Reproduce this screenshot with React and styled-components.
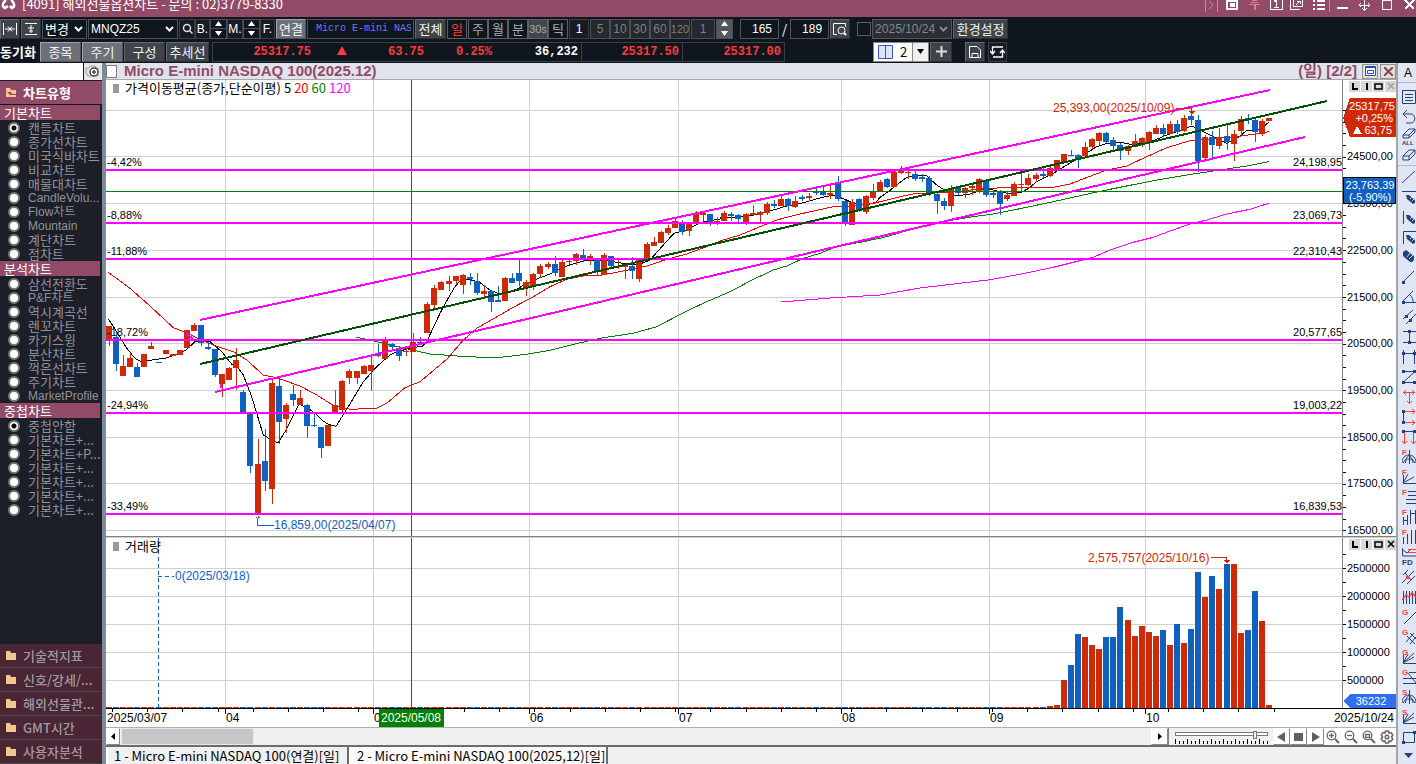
import React from 'react';
import styled, { createGlobalStyle, css } from 'styled-components';

const UI = '"Noto Sans CJK KR",sans-serif';
const WIDE = '"Liberation Sans","Noto Sans CJK KR",sans-serif';
const MONO = '"Liberation Mono",monospace';

const wine = '#924b67';
const red = '#ce2a08';
const blue = '#1060c0';
const magenta = '#ff00ff';

const Global = createGlobalStyle`
  *{box-sizing:border-box}
  html,body{margin:0;padding:0;background:#f0f0f0}
  body{font:13px/14px ${UI};color:#000}
  button,input,select{font:inherit;color:inherit;margin:0;padding:0;border:0;border-radius:0;background:none}
  svg{display:block;flex:none}
`;

const Window = styled.div`
  min-height:100vh;display:flex;flex-direction:column;
`;

/* ---------- window title ---------- */
const TitleBar = styled.header`
  height:17px;overflow:hidden;background:${wine};color:#fff;
  display:flex;align-items:flex-end;
`;
const Logo = styled.svg.attrs({ width: 22, height: 17, viewBox: '0 0 22 17' })``;
const TitleText = styled.h1`
  margin:0;flex:1;font:400 13px/26px ${UI};white-space:nowrap;
`;
const TitleButton = styled.button`
  width:${p => p.$w || 22}px;height:17px;color:${p => (p.$dim ? '#d8808c' : '#fff')};
`;

/* ---------- toolbars ---------- */
const Toolbars = styled.div`
  height:46px;background:#0f161d;color:#fff;overflow:hidden;
  display:flex;flex-direction:column;gap:2px;padding-top:1px;
`;
const Bar = styled.div`display:flex;align-items:center;height:21px;gap:1px;`;
const Cluster = styled.div`display:flex;flex:none;`;
const Gap = styled.span`width:${p => p.$w}px;flex:none;`;
const tones = {
  normal: css`background:#3f444b;border-color:#62676e #2c3036 #2c3036 #62676e;color:#f0f0f0;`,
  lit: css`background:#6b7079;border-color:#a0a4b8 #50545c #50545c #a0a4b8;color:#f4f4f4;`,
  dark: css`background:#181b24;border-color:#3c4046;color:#fff;`,
  period: css`background:#43474d;border-color:#5c6066;color:#a6a9ad;`,
  off: css`background:#25292e;border-color:#4c5056;color:#7c7f83;`,
  selected: css`background:#10161d;border-color:#5c6066;color:#ff3838;`,
};
const Tool = styled.button`
  width:${p => p.$w}px;height:20px;flex:none;border:1px solid;
  display:flex;align-items:center;justify-content:center;white-space:nowrap;
  ${p => p.$latin && css`font:400 ${p.$latin}px/14px ${WIDE};`}
  ${p => tones[p.$tone || 'normal']}
`;
const Pick = styled.span`
  width:${p => p.$w}px;height:20px;flex:none;display:flex;align-items:center;
  border:1px solid #50545a;padding-right:3px;
  background:${p => (p.$off ? '#2b2e33' : '#10161d')};color:${p => (p.$off ? '#85888c' : '#fff')};
  select{flex:1;min-width:0;appearance:none;padding-left:2px;outline:0;${p => p.$latin && css`font:400 12px/14px ${WIDE};`}}
`;
const Field = styled.input`
  width:${p => p.$w}px;height:20px;flex:none;
  && {border:1px solid #50545a;background:#10161d;color:#fff;text-align:right;padding-right:6px;font:400 12px/14px ${WIDE}}
`;
const NameField = styled(Field)`
  &&& {font:400 10px/14px ${MONO};color:#7c70e8;text-align:left;padding:0 2px 0 8px}
`;
const Spin = styled.span`
  width:17px;height:20px;flex:none;display:flex;flex-direction:column;
  border:1px solid #4c5056;
  button{flex:1;width:100%;display:flex;align-items:center;justify-content:center;background:${p => (p.$off ? '#55585c' : '#10161d')}}
  button + button{border-top:1px solid #4c5056}
`;
const DarkCheck = styled.input`
  && {appearance:none;width:14px;height:14px;flex:none;border:1px solid #5a5e64;background:#10161d}
`;
const SyncLabel = styled.span`width:39px;flex:none;font-weight:700;white-space:nowrap;`;
const Quotes = styled.div`
  display:flex;align-items:center;height:20px;width:573px;flex:none;border:1px solid #3a3f45;
  font:700 12px/18px ${MONO};color:#ff3a3a;
`;
const Quote = styled.span`
  width:${p => p.$w}px;text-align:right;padding-right:3px;height:18px;
  color:${p => (p.$plain ? '#fff' : 'inherit')};
  border-right:${p => (p.$line ? '1px solid #3a3f45' : 0)};
  svg{display:inline-block}
`;
const LayoutPick = styled.span`
  width:56px;height:20px;display:flex;align-items:center;background:#fff;border:1px solid #888;color:#000;
  padding-left:4px;
  select{appearance:none;flex:1;min-width:0;padding-left:7px;outline:0}
`;
const PickArrow = styled.span`
  width:16px;height:18px;border-left:1px solid #888;background:#f0f0f0;display:flex;align-items:center;justify-content:center;
`;

/* ---------- body ---------- */
const Body = styled.div`flex:1;display:flex;`;

const Sidebar = styled.aside`
  width:106px;flex:none;display:flex;flex-direction:column;background:#1c1f28;
  border-right:4px solid #7c8a9c;
`;
const SearchRow = styled.div`
  display:flex;height:17px;background:#10161d;margin-bottom:1px;
  input{flex:1;min-width:0;background:#fff;outline:0}
  button{width:18px;background:#e8e8e8;margin-left:1px}
`;
const Group = styled.button`
  && {
    display:flex;align-items:center;gap:7px;width:100%;
    height:24px;padding-left:6px;text-align:left;white-space:nowrap;
    font:${p => (p.$open ? 700 : 500)} 13px/14px ${UI};
    color:${p => (p.$open ? '#fff' : '#a09aa2')};
    background:${p => (p.$open ? wine : '#4a2533')};
    border-bottom:1px solid ${p => (p.$open ? '#10161d' : '#4a464c')};
  }
`;
const Section = styled.h2`
  margin:0 2px 1px 0;height:15px;background:${wine};color:#fff;
  font:400 13px/15px ${UI};padding-left:4px;
`;
const RadioRow = styled.label`
  display:flex;align-items:center;height:14px;padding-left:8px;
  font:400 13px/14px ${UI};color:#8f929c;white-space:nowrap;
  ${p => p.$latin && css`font:400 12px/14px ${WIDE};`}
  input{appearance:none;flex:none;width:12px;height:12px;border-radius:50%;margin-right:8px;
    background:#fff;border:2px solid #777}
  input:checked{background:radial-gradient(circle,#000 2px,#fff 3px)}
`;
const Fill = styled.div`flex:1;`;

const Center = styled.main`flex:1;min-width:0;display:flex;flex-direction:column;background:#fff;`;
const ChartHead = styled.div`
  height:17px;background:#dfe3eb;border-bottom:1px solid #a8a8a8;color:${wine};
  display:flex;align-items:center;gap:2px;
  font:700 15px/16px ${WIDE};
  input{appearance:none;width:11px;height:13px;background:#fff;border:1px solid #808080;margin-right:5px}
  strong{flex:1;white-space:nowrap}
  button{width:16px;height:15px;background:#e0e0e0;border:1px solid #909090;display:flex;align-items:center;justify-content:center}
`;
const Pane = styled.section`
  display:flex;height:${p => p.$h}px;flex:none;position:relative;
`;
const chartText = css`font:400 11px/14px ${WIDE};shape-rendering:crispEdges;`;
const Plot = styled.svg`flex:1 1 0;min-width:0;height:100%;border-right:1px solid #808080;${chartText}`;
const Axis = styled.svg`width:53px;height:100%;${chartText}`;
const PaneButtons = styled.div`
  position:absolute;top:1px;right:0;display:flex;gap:1px;
  button{width:11px;height:11px;background:#d8d8d8;display:flex;align-items:center;justify-content:center}
`;
const Legend = styled.div`
  position:absolute;left:7px;top:1px;display:flex;align-items:center;height:14px;gap:3px;white-space:nowrap;
  i{width:6px;height:9px;background:#9a9a9a;margin-right:3px}
`;
const Key = styled.span`color:${p => p.$c};`;
const Rule = styled.div`height:2px;background:#808080;border-bottom:1px solid #d0d0d0;`;
const DateAxis = styled.svg`width:100%;height:20px;border-bottom:1px solid #b0b0b0;${chartText}font-size:12px;`;

const ScrollRow = styled.div`
  display:flex;height:19px;background:#f0f0f0;border-bottom:2px solid #6c6c6c;margin-top:auto;
`;
const Thumb = styled.div`width:133px;background:#c6c6c8;border:1px solid #e8e8e8;margin-left:1px;`;
const Track = styled.div`flex:1;`;
const Press = styled.button`
  && {
    width:${p => p.$w || 17}px;height:17px;background:#fff;color:#000;
    border:1px solid #fff;border-right-color:#888;border-bottom-color:#888;
    display:flex;align-items:center;justify-content:center;
  }
`;
const Zoomer = styled.div`
  width:105px;display:flex;flex-direction:column;padding:2px 6px 0;border-left:1px solid #808080;
  input{appearance:none;width:93px;height:8px;display:block;outline:0}
  input::-webkit-slider-runnable-track{height:4px;background:#fff;border:1px solid #777}
  input::-webkit-slider-thumb{appearance:none;width:4px;height:8px;margin-top:-2px;background:#f0f0f0;border:1px solid #777}
`;
const Lenses = styled.div`display:flex;background:#fff;button{width:18px;display:flex;align-items:center;justify-content:center}`;
const Tabs = styled.nav`display:flex;height:17px;background:#f0f0f0;`;
const Tab = styled.button`
  && {
    height:17px;width:${p => p.$w}px;text-align:left;padding-left:6px;white-space:nowrap;
    background:${p => (p.$on ? '#fafafa' : '#f0f0f0')};
    border-left:2px solid #fff;border-right:2px solid #6c6c6c;
  }
`;

const Strip = styled.aside`
  width:20px;flex:none;background:#e1e6f5;border-left:2px solid #a4a4ac;overflow:hidden;
  display:flex;flex-direction:column;
`;
const StripButton = styled.button`
  && {
    height:${p => p.$h || 20}px;width:18px;flex:none;padding-left:4px;color:#24427a;
    border-bottom:${p => (p.$line ? '1px solid #b4b8c4' : 0)};
    margin-bottom:${p => p.$after || 0}px;
  }
`;

/* ---------- chart data ---------- */
const STEP = 7.073;
const FIRST = 3;
const barX = i => Math.round(FIRST + i * STEP);

/* Each row: direction, high, body top, body bottom, low – in thirds of a pixel below the given level. */
const block = (level, rows) =>
  rows.trim().split(/\s*;\s*/).filter(Boolean).map(r => {
    const [dir, ...v] = r.trim().split(' ');
    return [dir === 'u', ...v.map(n => Math.round(level + Number(n) / 3))];
  });

const candles = [
  ...block(180, `u 198 198 240 257;d 215 232 311 332;u 285 319 347 347;u 280 294 322 322;d 310 321 350 350;u 282 282 322 322;
  u 246 258 266 266;d 306 306 309 309;u 270 270 281 281;u 282 282 287 287;u 270 270 284 284;u 210 210 263 263;u 188 195 213 213;
  d 195 195 248 257;d 245 262 266 270;d 267 267 345 350;u 342 342 372 410;u 321 324 360 360;u 264 300 324 390;d 390 396 457 457;
  d 457 457 617 638;u 537 612 762 762;d 507 603 662 692;u 360 369 686 731;d 352 378 486 553;u 430 435 476 520;d 375 402 420 437;
  u 390 414 435 435;d 432 435 497 533;d 460 495 498 500;d 501 501 563 593;u 495 495 557 557;u 390 435 457 457;u 360 363 450 457;
  u 327 333 353 371;u 333 333 353 371;u 315 318 342 342;u 288 315 333 392;d 252 280 287 290;u 232 240 297 298;d 249 252 260 272;
  d 258 264 287 302;u 268 273 276 288;u 219 246 276 277`),
  ...block(100, `d 470 486 490 490;u 366 372 459 459;u 315 324 375 388;u 303 306 330 330;u 288 303 312 333;u 288 288 303 315;
  u 282 285 315 342;d 279 291 297 315;d 279 303 339 345;u 315 333 342 351;d 330 333 366 396;d 318 360 366 366;u 291 294 363 363;
  d 279 294 309 309;d 237 279 303 318;u 300 306 321 348;u 279 282 318 330;u 252 258 282 294;u 246 252 261 267;d 228 252 279 288;
  u 237 246 291 291;u 237 243 246 255;u 219 222 243 255;d 207 225 237 246;u 222 228 235 255;d 237 237 273 288;u 219 225 285 285;
  d 228 228 258 264;u 237 258 260 267;u 252 255 261 297;d 231 258 272 297;u 237 240 297 306;u 186 192 237 237;u 171 186 198 198;
  u 153 156 189 189;u 135 144 159 165;u 118 123 144 144;d 120 130 156 165;u 130 132 153 168;u 93 98 126 130;u 96 99 105 123;
  d 102 102 126 137;u 111 123 126 135;u 93 99 123 124`),
  ...block(0, `d 396 402 408 423;d 402 405 417 426;u 399 402 426 435;u 375 399 405 408;u 393 396 405 430;u 366 372 399 405;
  d 360 372 378 384;u 348 357 378 378;d 354 357 378 393;u 348 363 381 384;d 345 351 357 363;u 339 348 354 363;d 324 334 339 345;
  d 318 333 345 348;u 315 339 346 357;d 288 309 357 363;d 360 363 426 438;u 357 366 435 435;d 354 357 390 396;u 345 348 396 402;
  u 312 336 354 360;u 300 306 333 333;d 294 297 321 324;u 273 276 321 321;u 258 267 279 282;u 270 275 279 297;d 273 282 297 303;
  d 282 291 297 306;d 288 294 342 348;d 336 342 363 402;d 354 363 378 390;u 315 324 378 396;d 318 324 339 345;u 321 324 339 354;
  u 312 318 324 345;u 294 297 333 339;d 300 303 345 351;d 330 339 345 354;d 330 336 372 405;u 336 345 357 363;u 306 312 348 348;
  u 276 312 315 333;u 282 294 315 318;u 279 285 297 306;d 264 282 288 298;u 261 264 288 291;u 240 240 267 267;u 222 222 249 249;
  d 210 225 228 228;d 222 225 237 264;u 186 201 228 231;u 174 177 201 207;u 156 159 183 195;d 156 159 186 189;d 171 180 198 210;
  d 189 195 213 240;u 195 198 213 225;u 162 183 201 201;u 171 174 189 201;u 153 156 189 210;u 135 144 162 162;d 132 144 162 171;
  u 123 132 162 162;d 120 132 156 162;u 105 114 153 156;d 96 108 120 135;d 105 120 243 276;u 165 171 234 237;d 153 171 195 240;
  u 144 171 198 207;d 132 168 186 210;u 150 162 192 243;u 108 117 153 168;d 102 115 117 132;d 117 120 156 186;u 117 123 162 168;
  u 114 114 123 123`),
];

/* Curve points in thirds of a pixel, relative to an x / y origin. */
const curve = (x0, y0, pts) =>
  pts.split(' ').map(p => {
    const [x, y] = p.split(',').map(Number);
    return `${(x0 + x / 3).toFixed(1)},${(y0 + y / 3).toFixed(1)}`;
  }).join(' ') + ' ';

const ma5 =
  curve(-6, 180, '25,177 50,215 80,265 105,295 125,306 155,300 195,295 230,283 258,270 285,245 330,245 365,275 395,312 405,312 430,345 455,410 490,525 515,540 534,548 555,515 597,432 625,445 645,460 665,480 685,493 708,499 745,440 790,365 830,320 870,285 900,270') +
  curve(294, 100, '0,513 40,502 65,500 80,485 120,400 150,345 165,320 180,303 205,297 240,308 270,330 300,343 350,328 380,310 410,297 450,282 500,258 550,243 600,240 640,245 680,252 720,252 750,240 790,195 822,160 860,150 900,128 930,122 960,117') +
  curve(614, 0, '0,411 50,412 100,405 150,393 200,378 250,368 300,354 340,345 375,358 400,370 440,376 470,365 480,352 505,335 530,315 560,292 590,286 620,288 650,315 680,335 710,348 750,342 800,325 830,333 870,342 905,337 935,318') +
  curve(914, 0, '15,332 50,305 100,280 140,255 180,232 230,200 260,190 300,187 340,194 400,182 440,165 490,148 515,138 540,150 580,170 620,190 650,175 680,152 710,150 730,140 747,126');
const ma20 =
  curve(-6, 180, '25,37 90,85 150,138 220,203 258,218 300,238 340,255 400,275 440,300 490,345 530,353 600,378 650,405 700,436 750,448 830,445 860,430 915,383 960,365') +
  curve(294, 100, '140,538 160,515 190,480 230,445 300,405 340,382 400,350 450,320 500,298 550,288 600,286 660,275 740,258 800,238 860,222 920,200') +
  curve(614, 0, '0,483 60,465 120,440 170,420 240,402 340,380 400,378 460,370 540,350 590,340 690,337 800,325 900,322') +
  curve(914, 0, '0,322 100,322 150,312 220,285 260,270 320,258 380,230 440,203 510,182 570,177 650,170 700,163 747,155');
const ma60 =
  curve(-6, 180, '768,232 800,238 850,250 900,262') +
  curve(294, 100, '50,513 90,522 200,530 290,533 380,523 450,511 500,498 560,484 610,473 700,460 770,440 860,393 920,365 990,335') +
  curve(614, 0, '96,600 160,570 200,558 250,535 300,520 350,500 430,485 500,470 560,452 620,435 700,420 760,410 820,402') +
  curve(914, 0, '0,386 100,365 235,335 300,322 400,302 500,285 600,270 680,258 747,245');
const ma120 =
  '675,222 724,218 774,215 814,208 ' +
  curve(914, 0, '-96,600 0,583 100,562 220,532 270,510 340,487 400,472 450,453 510,432 560,420 620,402 690,388 747,370');

const levels = [
  [90, '-4,42%', '24,198,95'],
  [143, '-8,88%', '23,069,73'],
  [179, '-11,88%', '22,310,43'],
  [260, '-18,72%', '20,577,65'],
  [333, '-24,94%', '19,003,22'],
  [434, '-33,49%', '16,839,53'],
];
const prices = [[30, ''], [76, '24500,00'], [123, '23500,00'], [170, '22500,00'], [217, '21500,00'], [263, '20500,00'], [310, '19500,00'], [357, '18500,00'], [403, '17500,00'], [450, '16500,00']];
const months = [[119, '04'], [267, '0'], [423, '06'], [572, '07'], [735, '08'], [883, '09'], [1039, '10']];
const volumes = { 133: 2, 134: 3, 135: 28, 136: 43, 137: 74, 138: 71, 139: 63, 140: 59, 141: 71, 142: 71, 143: 101, 144: 88, 145: 72, 146: 82, 147: 76, 148: 72, 149: 78, 150: 63, 151: 84, 152: 65, 153: 79, 154: 136, 155: 111, 156: 132, 157: 119, 158: 144, 159: 144, 160: 75, 161: 78, 162: 117, 163: 87, 164: 3 };
const volumeTicks = [[30, '2500000'], [58, '2000000'], [86, '1500000'], [114, '1000000'], [142, '500000']];

const Candle = ({ i, c: [up, hi, top, bottom, low] }) => {
  const x = barX(i);
  return (
    <g fill={up ? red : blue}>
      <rect x={x} y={hi} width="1" height={Math.max(low - hi, 1)} />
      <rect x={x - 3} y={top} width="6" height={Math.max(bottom - top, 1)} />
    </g>
  );
};

const MonthLines = () => months.map(([x]) => <rect key={x} x={x} y="0" width="1" height="100%" fill="#d0d0d0" />);

const PriceChart = () => (
  <Plot>
    {prices.map(([y]) => <rect key={y} x="0" y={y} width="100%" height="1" fill="#d0d0d0" />)}
    <MonthLines />
    <polyline points={ma5} fill="none" stroke="#000" />
    <polyline points={ma20} fill="none" stroke="#f00000" />
    <polyline points={ma60} fill="none" stroke="#008000" />
    <polyline points={ma120} fill="none" stroke={magenta} />
    {candles.map((c, i) => <Candle key={i} i={i} c={c} />)}
    <rect x="0" y="111" width="100%" height="1" fill="#008000" />
    <rect x="305" y="0" width="1" height="100%" fill="#008000" />
    {levels.map(([y, left, right]) => (
      <g key={y}>
        <rect x="0" y={y - 1} width="100%" height="2" fill={magenta} />
        <text x="1" y={y - 4}>{left}</text>
        <text x="100%" y={y - 4} textAnchor="end">{right}</text>
      </g>
    ))}
    <g strokeWidth="2" stroke={magenta}>
      <line x1="94" y1="240" x2="1164" y2="10" />
      <line x1="109" y1="312" x2="1199" y2="57" />
      <line x1="80" y1="253" x2="87" y2="259" />
      <line x1="115" y1="304" x2="115" y2="308" />
      <line x1="94" y1="284" x2="1221" y2="21" stroke="#005000" />
    </g>
    <g fill={red}>
      <text x="947" y="32" fontSize="12">25,393,00(2025/10/09)</text>
      <path d="M1070 28h16v4h-1v-3h-15zM1082 31h7l-3 3h-1z" />
    </g>
    <g fill={blue}>
      <text x="168" y="449" fontSize="12">16,859,00(2025/04/07)</text>
      <path d="M151 436h1v9h16v1h-17zM149 438h5l-2-2z" />
    </g>
  </Plot>
);

const PriceAxis = () => (
  <Axis>
    {Array.from({ length: 37 }, (_, k) => <rect key={k} x="0" y={Math.round(30 + k * 11.68)} width="3" height="1" />)}
    {prices.map(([y, t]) => <text key={y} x="4" y={y + 4}>{t}</text>)}
    <path d="M0 38 7 18H53V57H7Z" fill={red} />
    <g fill="#fff" textAnchor="end">
      <text x="52" y="30">25317,75</text>
      <text x="50" y="42">+0,25%</text>
      <text x="49" y="54">63,75</text>
      <path d="m10 54 4-8 5 8z" />
    </g>
    <rect x="0.5" y="97.5" width="52" height="26" fill={blue} stroke="#000" />
    <g fill="#fff" textAnchor="middle">
      <text x="27" y="109">23,763,39</text>
      <text x="27" y="121">(-5,90%)</text>
    </g>
  </Axis>
);

const VolumeChart = () => (
  <Plot>
    {volumeTicks.map(([y]) => <rect key={y} x="0" y={y} width="100%" height="1" fill="#d0d0d0" />)}
    <MonthLines />
    {candles.map(([up], i) => {
      const h = volumes[i] || 1;
      return <rect key={i} x={barX(i) - 3} y={170 - h} width="6" height={h} fill={up ? red : blue} />;
    })}
    <rect x="305" y="0" width="1" height="100%" fill="#008000" />
    <path d="M52.500 170V0M52 38.500h16" stroke={blue} strokeDasharray="4 3" fill="none" />
    <text x="69" y="42" fill={blue} fontSize="12">0(2025/03/18)</text>
    <g fill={red}>
      <text x="982" y="24" fontSize="12">2,575,757(2025/10/16)</text>
      <path d="M1105 19h16v4h-1v-3h-15zM1117 22h7l-3 3h-1z" />
    </g>
  </Plot>
);

const VolumeAxis = () => (
  <Axis>
    {Array.from({ length: 10 }, (_, k) => <rect key={k} x="0" y={16 + k * 14} width="3" height="1" />)}
    {volumeTicks.map(([y, t]) => <text key={y} x="4" y={y + 4}>{t}</text>)}
    <path d="M0 163 7 156H53V170H7Z" fill="#3070f0" />
    <text x="28" y="167" fill="#fff" textAnchor="middle">36232</text>
  </Axis>
);

const Dates = () => (
  <DateAxis>
    <rect width="100%" height="1" />
    {Array.from({ length: 34 }, (_, k) => <rect key={k} x={Math.round(6 + k * 35.2)} y="0" width="1" height="4" />)}
    {months.map(([x, t]) => (
      <g key={x}>
        <rect x={x} y="0" width="1" height="6" />
        <text x={x + 1} y="14">{t}</text>
      </g>
    ))}
    <text x="1" y="14">2025/03/07</text>
    <rect x="273" y="1" width="65" height="18" fill="#008000" />
    <text x="305" y="14" fill="#fff" textAnchor="middle">2025/05/08</text>
    <svg x="100%" overflow="visible"><text x="-2" y="14" textAnchor="end">2025/10/24</text></svg>
  </DateAxis>
);

/* ---------- icons ---------- */
const Chevron = () => <svg width="9" height="6" viewBox="0 0 9 6" fill="none" stroke="currentColor" strokeWidth="2"><path d="m1 1 3.500 3.500L8 1" /></svg>;
const Tri = ({ dir }) => (
  <svg width="9" height="7" viewBox="0 0 9 7" fill="currentColor">
    <path d={{ up: 'M4.500 1 8 6H1z', down: 'M1 1h7L4.500 6z', left: 'M6 0v7L2 3.500z', right: 'M3 0v7l4-3.500z' }[dir]} />
  </svg>
);
const Play = ({ d }) => <svg width="11" height="10" viewBox="0 0 11 10" fill="#606060"><path d={d} /></svg>;
const Lens = ({ children }) => (
  <svg width="14" height="14" viewBox="0 0 14 14" fill="none" stroke="#666" strokeWidth="1.300">
    <circle cx="5.500" cy="5.500" r="4.300" /><path d="m9 9 4 4" strokeWidth="2.200" />{children}
  </svg>
);
const Folder = ({ open }) => (
  <svg width="10" height="9" viewBox="0 0 10 9">
    <path d="M0 0h4l1 2h5v7H0z" fill="#f0c890" />
    {open && <path d="M1 4h4l1 2h4v1H4L2 5z" fill={wine} />}
  </svg>
);
const Glyph = ({ children, w = 22 }) => (
  <svg width={w} height="17" viewBox={`0 0 ${w} 17`} fill="none" stroke="currentColor" shapeRendering="crispEdges">{children}</svg>
);

const titleIcons = [
  [<path d="M5.500 0v12M17.500 0v12M9 1l4 4-4 4" />, true],
  [<g><path d="M5 0v9h10V0M5 1h10" strokeWidth="1.500" /><path d="M8 3h4v3H8z" fill="currentColor" /></g>],
  [<g><path d="M10.500 5v5" strokeWidth="2" /><path d="M5 4.500h11M7 2.500h7M8 .5h5" strokeWidth="1.500" /></g>, true],
  [<g><path d="M4.500 0v9.500h12V0" strokeWidth="1.500" /><path d="M8 1h2.500v6M8 7.500h5" strokeWidth="1.500" /></g>],
  [<path d="M2 0v9.500h10M5.500 0v6.500h9V0M8 5l4-4M9 1h3v3" />],
  [<g><path d="M3 1h2M7 1h8M3 5h2M7 5h8M3 9h2M7 9h8" strokeWidth="2" /><path d="M19.500 0v12" stroke="#d8808c" /></g>],
  [<path d="M5 8h11" strokeWidth="2" />],
  [<path d="M10.500 0v10M5 5h11M8 8l2.500 2.500L13 8M7 3 5 5l2 2M14 3l2 2-2 2" />],
  [<path d="M6.500 0v9.500h9V0M6 .5h10" />],
  [<path d="m7 0 9 9M16 0 7 9" strokeWidth="2" />],
];

const T = ({ children }) => <text x="0" y="8" fontSize="8" fontWeight="700" fontFamily="Liberation Sans" fill="#ff3c3c" stroke="none">{children}</text>;
const dots = (...p) => p.map(([x, y]) => <rect key={`${x}-${y}`} x={x - 1} y={y - 1} width="3" height="3" fill="currentColor" stroke="none" />);
const pencil = (
  <g>
    <path d="M4 8h3l6 5v3l-2 1-6-5z" fill="currentColor" stroke="none" />
    <path d="m8 12 2-2M10 14l3-3" stroke="#c8d2ea" />
  </g>
);
const R = '#ff3c3c';
const fan = <path d="M1.500 8v8.500H14M1 16l5-9M1 16l11-6" />;
const arcs = <path d="M0 16c0-5 3-8 7-8s7 3 7 8M3.500 16c0-3 1-4 3.500-4s4 1 4 4M7.500 3v14M7 8l6 8M7 8l-6 8" />;
const stripIcons = [
  ['목록', <path d="M.5 3.500h13v13H.5zM3 7.500h8M3 10.500h8M3 13.500h8" />],
  ['되돌리기', <path d="M5 3 1 7l4 4M1 7h8c5 0 5 9 0 9H4" />],
  ['모두 지우기', <g><path d="m1 8 6-6h6L7 8zM1 8v3h6l6-6V2M7 8v3" /><text x="0" y="18" fontSize="6" fontWeight="700" fontFamily="Liberation Sans" fill="currentColor" stroke="none">ALL</text></g>],
  ['지우기', <path d="m1 10 6-6h6l-6 6zM1 10v4h6l6-6V4M7 10v4" />, true],
  ['추세선', <path d="M0 16 13 4" />],
  ['수평선', <g><path d="M0 4.500h14" />{pencil}</g>],
  ['수직선', <g><path d="M1.500 4v13" />{pencil}</g>],
  ['십자선', <g><path d="M1.500 17V4.500H14" />{pencil}</g>],
  ['자유선', <g><path d="M1 5l3-2 8 6v4l-2 2h-2L1 9z" fill="currentColor" stroke="none" /><path d="m5 10 3-4M7 12l4-4" stroke="#c8d2ea" /></g>],
  ['선분', <g><path d="M1 15 12 4" />{dots([1, 15])}</g>],
  ['각도', <g><path d="M0 15.500h14M0 15 11 4M8 8c2 2 3 4 3 7" />{dots([1, 15])}</g>],
  ['평행선', <g><path d="M1 12 11 3M4 17 14 7" />{dots([4, 9], [8, 13])}</g>],
  ['수직폭', <g><path d="M1 4.500h13M1 15.500h13M7.500 4v12" />{dots([7, 4], [7, 15])}</g>],
  ['수평폭', <g><path d="M1.500 3v14M12.500 3v14M1 6.500h12" />{dots([1, 6], [12, 6])}</g>],
  ['지그재그', <g><path d="M1 4.500h12L1 15.500h12" />{dots([1, 4], [12, 4], [1, 15], [12, 15])}</g>],
  ['삼방향', <path stroke={R} d="M1 5.500h12M7.500 5v11M4 3 1.500 5.500 4 8M10 3l2.500 2.500L10 8M5 14l2.500 2.500L10 14" />],
  ['가로확장', <g><path d="M1.500 4v12" />{dots([1, 4], [1, 15])}<path stroke={R} d="M3 4.500h10M3 15.500h10M10 2l3 2.500L10 7M10 13l3 2.500-3 2.500" /></g>],
  ['세로확장', <g><path d="M1 4.500h12" />{dots([1, 4], [12, 4])}<path stroke={R} d="M2.500 6v10M11.500 6v10M0 14l2.500 3L5 14M9 14l2.500 3 2.500-3" /></g>],
  ['피보나치 원호', <g>{arcs}<T>F</T></g>],
  ['피보나치 팬', <g>{fan}<T>F</T></g>],
  ['피보나치 되돌림', <g><path d="M6 4.500h8M6 8.500h8M4 12.500h10M4 16.500h10" /><T>F</T></g>],
  ['피보나치 기간', <g><path d="M1.500 10v8M5.500 8v10M8.500 3v14M13.500 3v14M1 13.500h5M9 6.500h5" /><T>F</T></g>],
  ['피보나치 시간대', <g><path d="M1.500 10v7M5.500 7v10M9.500 3v14M13.500 3v14" /><T>F</T></g>],
  ['FD', <g><path d="M.5 1v8H14M1 3l4 3 4-4" /><path stroke={R} d="M6 2.500h8M6 5.500h8" /><text x="0" y="18" fontSize="8" fontWeight="700" fontFamily="Liberation Sans" fill="currentColor" stroke="none">FD</text></g>],
  ['피치포크', <g><path d="M0 16 12 4M5 17l8-8M1 8l5-5M3 6l6 7" /><rect x="4" y="9" width="3" height="3" fill={R} stroke="none" /></g>],
  ['회귀채널', <g><path d="M1.500 4v13M4.500 4v13M7.500 4v13M10.500 4v13M13.500 4v13" /><path stroke={R} strokeWidth="1.500" d="m0 13 4-5 3 2 3-4 4 4" /></g>],
  ['간선', <g><path d="M2 17 14 5" /><T>G</T></g>],
  ['간격자', <g><path d="m4 15 8-9M8 17l6-7M5 9l8 8M8 6l6 6" /><T>G</T></g>],
  ['간팬', <g>{fan}<path d="M1 16 12 6" /><T>G</T></g>],
  ['간되돌림', <g><path d="M7 5.500h7M1 11.500h13M1 16.500h13M6 6l8 10" /><T>G</T></g>],
  ['속도 원호', <g>{arcs}<T>S</T></g>],
  ['속도선', <g>{fan}<path d="M1 16 12 6" /><T>S</T></g>],
  ['사각형', <g><path d="M1.500 5.500h11v10h-11z" />{dots([12, 5], [1, 15])}</g>],
  ['더보기', <path d="M2 7h9l-4.500 5z" fill="currentColor" stroke="none" />],
];

const sections = [
  ['기본차트', ['캔들차트', '종가선차트', '미국식바차트', '비교차트', '매물대차트', 'CandleVolu...', 'Flow차트', 'Mountain', '계단차트', '점차트']],
  ['분석차트', ['삼선전환도', 'P&F차트', '역시계곡선', '렌꼬차트', '카기스윙', '분산차트', '꺽은선차트', '주기차트', 'MarketProfile']],
  ['중첩차트', ['중첩안함', '기본차트+...', '기본차트+P...', '기본차트+...', '기본차트+...', '기본차트+...', '기본차트+...']],
];

const Spinner = ({ off }) => (
  <Spin $off={off}><button aria-label="증가"><Tri dir="up" /></button><button aria-label="감소"><Tri dir="down" /></button></Spin>
);

const PaneTools = ({ faded }) => (
  <PaneButtons>
    {['M3 1v6h5', 'M5 1v7', 'M1 2h7v5H1z', 'm2 1 6 6M8 1 2 7'].map((d, i) => (
      <button key={d} aria-label={['로그', '반전', '최대화', '닫기'][i]}>
        <svg width="9" height="9" viewBox="0 0 9 9" fill="none" stroke={faded && i === 3 ? '#a0a0a0' : '#000'} strokeWidth={i < 2 ? 2 : 1.5}><path d={d} /></svg>
      </button>
    ))}
  </PaneButtons>
);

export default function App() {
  return (
    <Window>
      <Global />
      <TitleBar>
        <Logo fill="none" stroke="#fff" strokeWidth="2.500"><path d="M6 0C2 3 2 7 5 8l3-2M11 0c4 3 4 7 1 8l-2-2" /></Logo>
        <TitleText>[4091] 해외선물옵션차트 - 문의 : 02)3779-8330</TitleText>
        {titleIcons.map(([art, dim], i) => (
          <TitleButton key={i} $dim={dim} $w={i === 9 ? 18 : 22} aria-label={`창 도구 ${i + 1}`}><Glyph w={i === 9 ? 18 : 22}>{art}</Glyph></TitleButton>
        ))}
      </TitleBar>

      <Toolbars>
        <Bar>
          <Tool $w={20} aria-label="가로 맞춤"><svg width="14" height="12" viewBox="0 0 14 12" fill="none" stroke="#fff"><path d="M.5 0v12M13.500 0v12M2 6h10M5 3.500 7 6 5 8.500M9 3.500 7 6l2 2.500" /></svg></Tool>
          <Tool $w={20} aria-label="세로 맞춤"><svg width="12" height="12" viewBox="0 0 12 12" fill="none" stroke="#fff"><path d="M0 .5h12M0 11.500h12M6 2v8M3 5h6M4 8h4" /></svg></Tool>
          <Pick $w={45}><select aria-label="변경"><option>변경</option></select><Chevron /></Pick>
          <Pick $w={90} $latin><select aria-label="종목코드"><option>MNQZ25</option></select><Chevron /></Pick>
          <Cluster>
            <Tool $w={16} $tone="dark" aria-label="검색"><svg width="11" height="11" viewBox="0 0 11 11" fill="none" stroke="#ddd" strokeWidth="1.500"><circle cx="5" cy="5" r="3.500" /><path d="m7.500 7.500 3 3" /></svg></Tool>
            <Tool $w={15} $tone="dark" $latin={12}>B.</Tool><Spinner />
            <Tool $w={16} $tone="dark" $latin={12}>M.</Tool><Spinner />
            <Tool $w={15} $tone="dark" $latin={12}>F.</Tool>
          </Cluster>
          <Tool $w={30} $tone="lit">연결</Tool>
          <NameField $w={107} aria-label="종목명" defaultValue="Micro E-mini NAS" />
          <Tool $w={31}>전체</Tool>
          <Tool $w={20} $tone="selected">일</Tool>
          <Cluster>
            {['주', '월', '분', '30s', '틱'].map(t => <Tool key={t} $w={20} $tone="period" $latin={t === '30s' ? 11 : 0}>{t}</Tool>)}
          </Cluster>
          <Tool $w={20} $tone="dark" $latin={12}>1</Tool>
          <Cluster>
            {['5', '10', '30', '60', '120'].map(t => <Tool key={t} $w={20} $tone="off" $latin={t === '120' ? 11 : 12}>{t}</Tool>)}
          </Cluster>
          <Tool $w={24} $tone="off" $latin={12}>1</Tool><Spinner off />
          <Gap $w={5} />
          <Field $w={39} aria-label="표시 봉수" defaultValue="165" />
          <Gap $w={1} /><span>/</span><Gap $w={1} />
          <Field $w={39} aria-label="전체 봉수" defaultValue="189" />
          <Tool $w={20} aria-label="조회"><svg width="14" height="14" viewBox="0 0 14 14" fill="none" stroke="#fff"><path d="M4 12.500H.5V1.500h12V5" /><circle cx="8.500" cy="8.500" r="3.500" /><path d="m11 11 2 2" strokeWidth="2" /></svg></Tool>
          <Gap $w={5} />
          <DarkCheck type="checkbox" aria-label="날짜 지정" />
          <Pick $w={80} $off $latin><select aria-label="날짜"><option>2025/10/24</option></select><Chevron /></Pick>
          <Tool $w={55}>환경설정</Tool>
        </Bar>
        <Bar>
          <SyncLabel>동기화</SyncLabel>
          <Tool $w={41} $tone="lit">종목</Tool>
          <Tool $w={41} $tone="lit">주기</Tool>
          <Tool $w={41}>구성</Tool>
          <Tool $w={43}>추세선</Tool>
          <Gap $w={1} />
          <Quotes>
            <Quote $w={101}>25317.75</Quote>
            <Quote $w={36}><svg width="10" height="9" viewBox="0 0 10 9" fill="#ff3a3a"><path d="M5 0 10 9H0z" /></svg></Quote>
            <Quote $w={77}>63.75</Quote>
            <Quote $w={68}>0.25%</Quote>
            <Quote $w={87} $plain $line>36,232</Quote>
            <Quote $w={101} $line>25317.50</Quote>
            <Quote $w={101}>25317.00</Quote>
          </Quotes>
          <Gap $w={86} />
          <LayoutPick>
            <svg width="15" height="14" viewBox="0 0 15 14" fill="#dde6f4" stroke="#3c50c8"><path d="M.5.5h14v13H.5zM7.500 0v14" /></svg>
            <select aria-label="화면 분할"><option>2</option></select>
            <PickArrow><Tri dir="down" /></PickArrow>
          </LayoutPick>
          <Tool $w={22} aria-label="추가"><svg width="11" height="11" viewBox="0 0 11 11" stroke="#ddd" strokeWidth="2"><path d="M5.500 0v11M0 5.500h11" /></svg></Tool>
          <Gap $w={11} />
          <Tool $w={20} aria-label="저장"><svg width="12" height="12" viewBox="0 0 12 12" fill="none" stroke="#fff"><path d="M.5.5H8L11.500 4v7.500H.5zM3 11V7.500h6V11" /></svg></Tool>
          <Gap $w={1} />
          <Tool $w={19} $tone="dark" aria-label="전환"><svg width="15" height="12" viewBox="0 0 15 12" fill="none" stroke="#fff" strokeWidth="1.300"><path d="M2.500 7V1H13M0 5l2.500 3L5 5M12.500 5v6H3M10 7l2.500-3L15 7" /></svg></Tool>
        </Bar>
      </Toolbars>

      <Body>
        <Sidebar>
          <SearchRow>
            <input aria-label="차트 검색" />
            <button aria-label="찾기"><svg width="17" height="15" viewBox="0 0 17 15" fill="none" stroke="#444"><path d="M2 4h3l1-2h5l1 2h2v8H4L2 9z" stroke="#999" /><circle cx="10" cy="8" r="4" fill="#fff" strokeWidth="1.500" /><path d="M8 8h4M10 6v4" strokeWidth="1.500" /></svg></button>
          </SearchRow>
          <Group $open><Folder open />차트유형</Group>
          {sections.map(([name, items]) => (
            <React.Fragment key={name}>
              <Section>{name}</Section>
              {items.map((t, i) => (
                <RadioRow key={i} $latin={/^[A-Z]/.test(t)}>
                  <input type="radio" name={name === '중첩차트' ? 'overlay' : 'type'} defaultChecked={i === 0 && name !== '분석차트'} />{t}
                </RadioRow>
              ))}
            </React.Fragment>
          ))}
          <Fill />
          {['기술적지표', '신호/강세/...', '해외선물관...', 'GMT시간', '사용자분석'].map(t => <Group key={t}><Folder />{t}</Group>)}
        </Sidebar>

        <Center>
          <ChartHead>
            <input type="checkbox" aria-label="차트 선택" />
            <strong>Micro E-mini NASDAQ 100(2025.12)</strong>
            <span>(일) [2/2]</span>
            <Gap $w={1} />
            <button aria-label="최대화"><svg width="11" height="10" viewBox="0 0 11 10" fill="#fff" stroke="#2848c0"><path d="M.5.500h10v9H.5zM0 1.500h11M2.500 4.500h6v3h-6z" /></svg></button>
            <button aria-label="닫기"><svg width="9" height="9" viewBox="0 0 9 9" stroke="#984048" strokeWidth="2"><path d="m0 0 9 9M9 0 0 9" /></svg></button>
          </ChartHead>
          <Pane $h={456}>
            <PriceChart /><PriceAxis />
            <Legend><i />가격이동평균(종가,단순이평) <Key $c="#000">5</Key><Key $c="#f00">20</Key><Key $c="#008000">60</Key><Key $c={magenta}>120</Key></Legend>
            <PaneTools faded />
          </Pane>
          <Rule />
          <Pane $h={170}>
            <VolumeChart /><VolumeAxis />
            <Legend><i />거래량</Legend>
            <PaneTools />
          </Pane>
          <Dates />
          <ScrollRow>
            <Press $w={14} aria-label="왼쪽"><Tri dir="left" /></Press>
            <Thumb /><Track />
            <Press aria-label="오른쪽"><Tri dir="right" /></Press>
            <Zoomer>
              <input type="range" aria-label="확대" defaultValue="88" />
              <svg width="95" height="6" viewBox="0 0 95 6">{Array.from({ length: 24 }, (_, k) => <rect key={k} x={k * 4} y={k % 3 ? 3 : 1} width="1" height="5" />)}</svg>
            </Zoomer>
            <Press aria-label="이전"><Play d="M9 0v10L1 5z" /></Press>
            <Press aria-label="정지"><Play d="M1 1h9v8H1z" /></Press>
            <Press aria-label="다음"><Play d="M2 0v10l8-5z" /></Press>
            <Lenses>
              <button aria-label="확대"><Lens><path d="M3 5.500h5M5.500 3v5" /></Lens></button>
              <button aria-label="축소"><Lens><path d="M3 5.500h5" /></Lens></button>
              <button aria-label="영역 확대"><Lens><path d="M3.500 4.500h4v3h-4z" /></Lens></button>
              <button aria-label="설정"><svg width="14" height="14" viewBox="0 0 14 14" fill="none" stroke="#666" strokeWidth="1.500"><path d="m5.500 1 3 0 .5 2 2-.5 1.800 2.500L11.500 7l1.300 2-1.800 2.500-2-.5-.5 2h-3L5 11l-2 .5L1.200 9l1.300-2L1.200 5 3 2.500 5 3z" /><circle cx="7" cy="7" r="1.800" /></svg></button>
            </Lenses>
          </ScrollRow>
          <Tabs>
            <Tab $w={243}>1 - Micro E-mini NASDAQ 100(연결)[일]</Tab>
            <Tab $w={259} $on>2 - Micro E-mini NASDAQ 100(2025,12)[일]</Tab>
          </Tabs>
        </Center>

        <Strip>
          <StripButton $line $after={3} aria-label="글자"><svg width="14" height="19" viewBox="0 0 14 19"><text x="2" y="14" fontSize="12" fontFamily="Liberation Sans">A</text></svg></StripButton>
          {stripIcons.map(([name, art, line], i) => (
            <StripButton key={name} $line={line} $h={i === stripIcons.length - 1 ? 17 : 20} aria-label={name}>
              <svg width="14" height={i === stripIcons.length - 1 ? 17 : 19} viewBox={`0 0 14 ${i === stripIcons.length - 1 ? 17 : 19}`} fill="none" stroke="currentColor">{art}</svg>
            </StripButton>
          ))}
        </Strip>
      </Body>
    </Window>
  );
}
